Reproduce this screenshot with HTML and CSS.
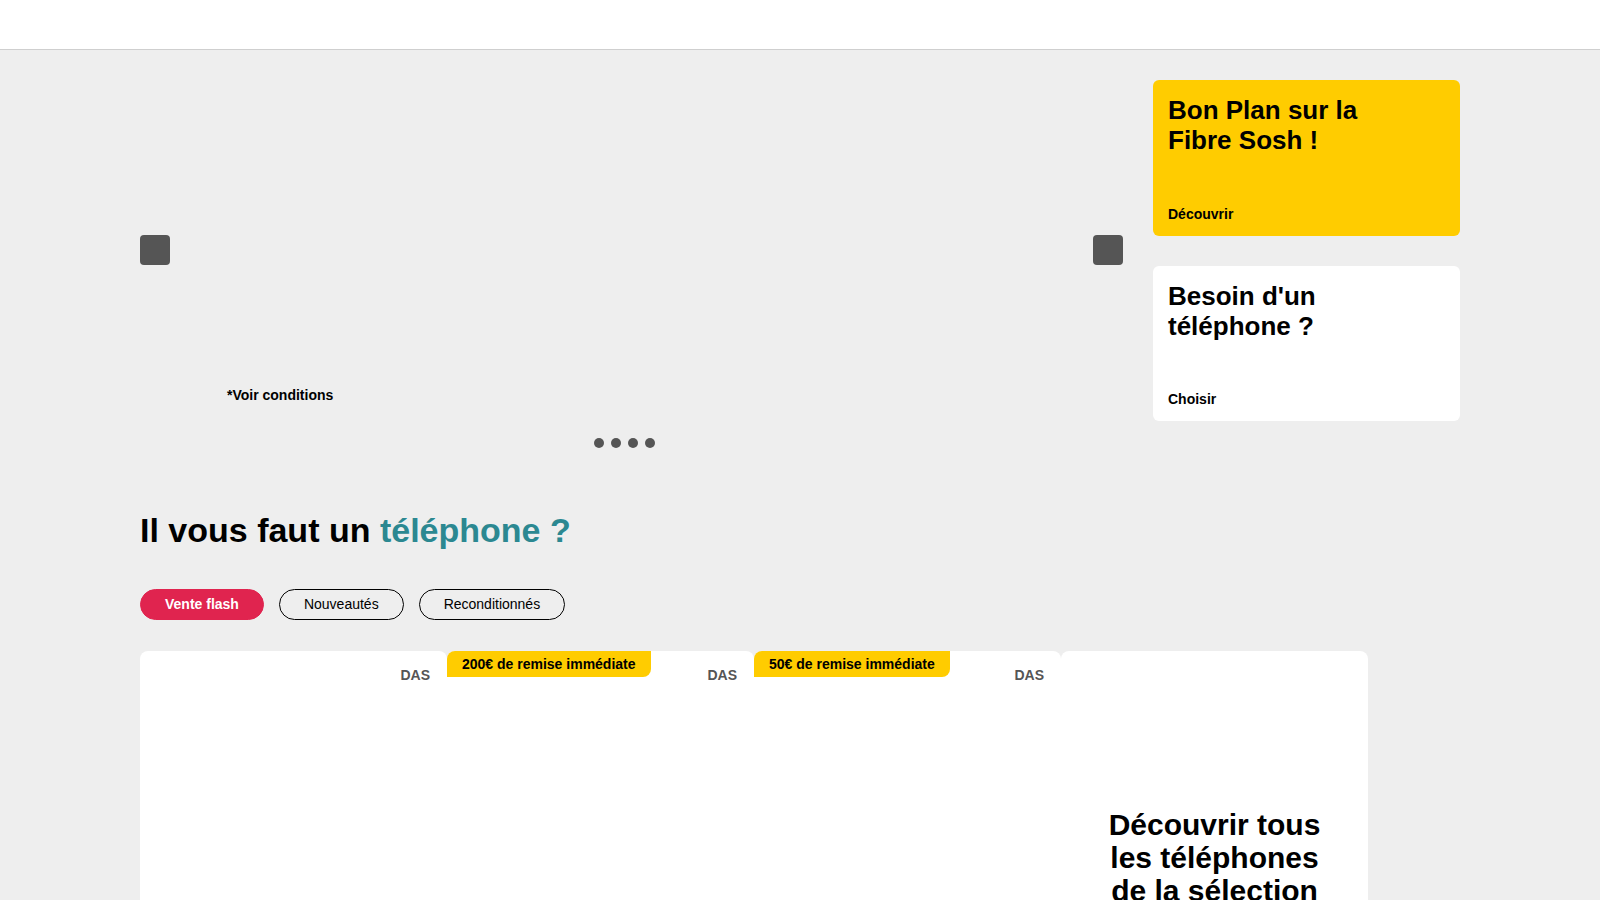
FILE: index.html
```html
<!DOCTYPE html>
<html lang="fr">
<head>
<meta charset="utf-8">
<title>Sosh</title>
<link rel="stylesheet" href="styles.css">
</head>
<body>
<header class="site-header"></header>
<main class="page">
  <section class="hero">
    <div class="carousel">
      <div class="slide">
        <button class="arrow arrow-prev" aria-label="Précédent"></button>
        <p class="conditions">*Voir conditions</p>
        <button class="arrow arrow-next" aria-label="Suivant"></button>
      </div>
      <div class="dots">
        <span class="dot"></span><span class="dot"></span><span class="dot"></span><span class="dot"></span>
      </div>
    </div>
    <aside class="side">
      <a class="promo promo-yellow" href="#">
        <h3 class="promo-title">Bon Plan sur la<br>Fibre Sosh !</h3>
        <span class="promo-link">Découvrir</span>
      </a>
      <a class="promo promo-white" href="#">
        <h3 class="promo-title">Besoin d'un<br>téléphone ?</h3>
        <span class="promo-link">Choisir</span>
      </a>
    </aside>
  </section>

  <section class="phones">
    <h2 class="phones-title">Il vous faut un <span class="accent">téléphone ?</span></h2>
    <div class="filters">
      <button class="pill pill-active">Vente flash</button>
      <button class="pill">Nouveautés</button>
      <button class="pill">Reconditionnés</button>
    </div>
    <div class="products">
      <article class="product">
        <div class="product-head"><span class="das">DAS</span></div>
      </article>
      <article class="product">
        <div class="product-head"><span class="badge">200€ de remise immédiate</span><span class="das">DAS</span></div>
      </article>
      <article class="product">
        <div class="product-head"><span class="badge">50€ de remise immédiate</span><span class="das">DAS</span></div>
      </article>
      <article class="product product-all">
        <h3 class="all-title">Découvrir tous les téléphones de la sélection</h3>
      </article>
    </div>
  </section>
</main>
</body>
</html>
```
FILE: styles.css
```css
* { box-sizing: border-box; }

body {
  margin: 0;
  background: #eeeeee;
  font-family: "Liberation Sans", Arial, sans-serif;
  color: #000;
}

.site-header {
  height: 50px;
  background: #fff;
  border-bottom: 1px solid #cfcfcf;
}

.page {
  width: 1320px;
  margin: 0 auto;
  padding-top: 30px;
  overflow: hidden;
  height: 850px;
}

/* hero */
.hero {
  display: flex;
  gap: 30px;
  align-items: flex-start;
}

.carousel {
  flex: 1;
}

.slide {
  position: relative;
  height: 341px;
  display: flex;
  flex-direction: column;
  justify-content: flex-end;
  padding: 0 0 18px 87px;
}

.conditions {
  margin: 0;
  font-size: 14px;
  font-weight: 700;
  line-height: 16px;
}

.arrow {
  position: absolute;
  top: 155px;
  width: 30px;
  height: 30px;
  padding: 0;
  border: 0;
  border-radius: 4px;
  background: #555;
}

.arrow-prev { left: 0; }
.arrow-next { right: 0; }

.dots {
  display: flex;
  justify-content: center;
  gap: 7px;
  margin-top: 17px;
  padding-right: 15px;
}

.dot {
  width: 10px;
  height: 10px;
  border-radius: 50%;
  background: #555;
}

.side {
  width: 307px;
  height: 341px;
  display: flex;
  flex-direction: column;
  gap: 30px;
}

.promo {
  flex: 1;
  display: flex;
  flex-direction: column;
  justify-content: space-between;
  padding: 15px 15px 14px;
  border-radius: 6px;
  color: #000;
  text-decoration: none;
}

.promo-yellow { background: #ffcc00; }
.promo-white { background: #fff; }

.promo-title {
  margin: 0;
  font-size: 26px;
  line-height: 30px;
  font-weight: 700;
}

.promo-link {
  font-size: 14px;
  line-height: 16px;
  font-weight: 700;
}

/* phones */
.phones-title {
  margin: 62px 0 0;
  font-size: 34px;
  line-height: 40px;
  font-weight: 700;
}

.accent { color: #2b8891; }

.filters {
  display: flex;
  gap: 15px;
  margin-top: 39px;
}

.pill {
  padding: 7px 24px;
  border: 1px solid #000;
  border-radius: 999px;
  background: transparent;
  font-family: inherit;
  font-size: 14px;
  line-height: 15px;
  color: #000;
}

.pill-active {
  background: #e0244f;
  border-color: #e0244f;
  color: #fff;
  font-weight: 700;
}

.products {
  display: flex;
  margin-top: 31px;
}

.product {
  flex: none;
  width: 307px;
  height: 440px;
  background: #fff;
  border-radius: 8px;
  overflow: hidden;
}

.product-head {
  display: flex;
  align-items: flex-start;
}

.badge {
  background: #ffcc00;
  padding: 0 15px;
  font-size: 14px;
  line-height: 26px;
  font-weight: 700;
  border-bottom-right-radius: 8px;
}

.das {
  margin-left: auto;
  padding: 16px 17px 0 0;
  font-size: 14px;
  line-height: 16px;
  font-weight: 700;
  color: #555;
}

.product-all {
  padding: 157px 30px 0;
  text-align: center;
}

.all-title {
  margin: 0;
  font-size: 30px;
  line-height: 33px;
  font-weight: 700;
}
```
